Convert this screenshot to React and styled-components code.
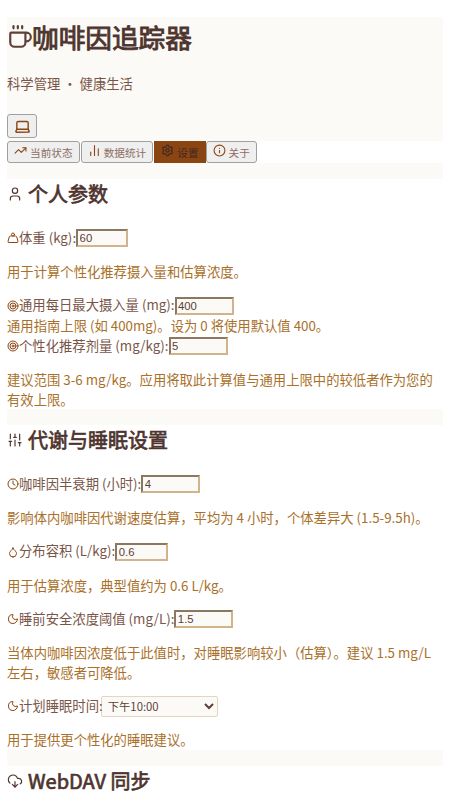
import React from "react";
import styled, { createGlobalStyle } from "styled-components";
import {
  Coffee,
  Laptop,
  TrendingUp,
  BarChart2,
  Settings,
  Info,
  User,
  Weight,
  Target,
  SlidersVertical,
  Clock,
  Droplet,
  Moon,
  CloudDownload,
} from "lucide-react";

const GlobalStyle = createGlobalStyle`
  body {
    margin: 0;
    background: #fff;
    font-family: "Noto Sans CJK SC", sans-serif;
    font-size: 13.33px;
    color: #4e342e;
  }
`;

const Page = styled.div`
  height: 800px;
  overflow: hidden;
  padding: 17px 7px 0;
`;

const Header = styled.header`
  background: #fcfaf6;
  height: 124px;
  overflow: hidden;
`;

const Title = styled.h1`
  display: flex;
  align-items: center;
  margin: 4px 0 0;
  font-size: 26.67px;
  line-height: 32px;
  font-weight: 400;
  -webkit-text-stroke: 0.9px #4e342e;
  color: #4e342e;

  svg {
    margin-right: -1px;
  }
`;

const Subtitle = styled.p`
  margin: 21px 0 0;
  line-height: 19px;
  color: #795548;
`;

const IconButton = styled.button`
  display: block;
  margin-top: 21px;
  width: 30px;
  height: 24px;
  padding: 0;
  font: inherit;
  color: #8b4513;
  background: #efefef;
  border: 1px solid #a0a0a0;
  border-width: 1px 1.5px 1.5px 1px;
  border-radius: 3px;
  line-height: 0;
`;

const Nav = styled.nav`
  display: flex;
  height: 22px;
  background: #fff;
`;

const Tab = styled.button`
  display: flex;
  align-items: center;
  gap: 3px;
  height: 22px;
  margin-right: ${(p) => (p.$tight ? "0" : "1px")};
  padding: 0 6px;
  font: inherit;
  font-size: 10.67px;
  color: ${(p) => (p.$active ? "#3e2723" : "#8d6e63")};
  background: ${(p) => (p.$active ? "#8b4513" : "#efefef")};
  border: 1px solid ${(p) => (p.$active ? "#8b4513" : "#a0a0a0")};
  border-width: 1px 1.5px 1.5px 1px;
  border-radius: ${(p) => (p.$active ? "0" : "3px")};

  svg {
    margin-top: -3px;
    color: ${(p) => (p.$active ? "#3e2723" : "#8b4513")};
  }
`;

const Section = styled.section`
  &::before {
    content: "";
    display: block;
    height: 16px;
    background: #fcfaf6;
  }
`;

const Heading = styled.h2`
  display: flex;
  align-items: center;
  gap: 5px;
  margin: 0;
  padding-bottom: 2px;
  font-size: 20px;
  line-height: 30px;
  font-weight: 400;
  -webkit-text-stroke: 0.7px #4e342e;
  color: #4e342e;

  svg {
    -webkit-text-stroke: 0;
  }
`;

const Field = styled.div`
  display: flex;
  align-items: center;
  margin-top: ${(p) => p.$top ?? 14}px;
  height: 20px;
  color: #795548;
  white-space: nowrap;
`;

const FieldIcon = styled.span`
  display: inline-flex;
  color: #8b4513;
`;

const FieldLabel = styled.span`
  position: relative;
  top: -1px;
`;

const NumberInput = styled.input`
  box-sizing: border-box;
  width: ${(p) => p.$width ?? 59}px;
  height: 18px;
  padding: 1px 1.5px;
  font-family: "Liberation Sans", sans-serif;
  font-size: 11.33px;
  color: #5d4037;
  background: #fcfaf6;
  border: 2px solid #d2b48c;
  border-color: #8a7860 #d2b48c #d2b48c #8a7860;
`;

const TimeSelect = styled.select`
  box-sizing: border-box;
  width: 117px;
  height: 21px;
  margin-left: -2px;
  padding: 0 0 0 2px;
  font-family: "Noto Sans CJK SC", sans-serif;
  font-size: 11.33px;
  color: #5d4037;
  background: #fcfaf6;
  border: 1px solid #e6d5bd;
  border-radius: 2px;
`;

const Hint = styled.p`
  margin: ${(p) => p.$top ?? 14}px 0 0;
  line-height: 19.5px;
  color: #a9702a;
`;

const App = () => {
  return (
    <>
      <GlobalStyle />
      <Page>
        <Header>
          <Title>
            <Coffee size={26} strokeWidth={2} color="#5d4037" />
            咖啡因追踪器
          </Title>
          <Subtitle>科学管理 · 健康生活</Subtitle>
          <IconButton aria-label="theme">
            <Laptop size={17} strokeWidth={2} />
          </IconButton>
        </Header>

        <Nav>
          <Tab>
            <TrendingUp size={13} />
            当前状态
          </Tab>
          <Tab>
            <BarChart2 size={13} />
            数据统计
          </Tab>
          <Tab $active $tight>
            <Settings size={13} />
            设置
          </Tab>
          <Tab>
            <Info size={13} />
            关于
          </Tab>
        </Nav>

        <Section>
          <Heading>
            <User size={16} strokeWidth={1.75} />
            个人参数
          </Heading>
          <Field $top={17}>
            <FieldIcon>
              <Weight size={12} />
            </FieldIcon>
            <FieldLabel>体重 (kg):</FieldLabel>
            <NumberInput defaultValue="60" $width={52} />
          </Field>
          <Hint>用于计算个性化推荐摄入量和估算浓度。</Hint>
          <Field>
            <FieldIcon>
              <Target size={12} />
            </FieldIcon>
            <FieldLabel>通用每日最大摄入量 (mg):</FieldLabel>
            <NumberInput defaultValue="400" />
          </Field>
          <Hint $top={0}>通用指南上限 (如 400mg)。设为 0 将使用默认值 400。</Hint>
          <Field $top={1}>
            <FieldIcon>
              <Target size={12} />
            </FieldIcon>
            <FieldLabel>个性化推荐剂量 (mg/kg):</FieldLabel>
            <NumberInput defaultValue="5" />
          </Field>
          <Hint>
            建议范围 3-6 mg/kg。应用将取此计算值与通用上限中的较低者作为您的有效上限。
          </Hint>
        </Section>

        <Section>
          <Heading>
            <SlidersVertical size={16} strokeWidth={1.75} />
            代谢与睡眠设置
          </Heading>
          <Field $top={17}>
            <FieldIcon>
              <Clock size={12} />
            </FieldIcon>
            <FieldLabel>咖啡因半衰期 (小时):</FieldLabel>
            <NumberInput defaultValue="4" />
          </Field>
          <Hint>影响体内咖啡因代谢速度估算，平均为 4 小时，个体差异大 (1.5-9.5h)。</Hint>
          <Field>
            <FieldIcon>
              <Droplet size={12} />
            </FieldIcon>
            <FieldLabel>分布容积 (L/kg):</FieldLabel>
            <NumberInput defaultValue="0.6" $width={53} />
          </Field>
          <Hint>用于估算浓度，典型值约为 0.6 L/kg。</Hint>
          <Field>
            <FieldIcon>
              <Moon size={12} />
            </FieldIcon>
            <FieldLabel>睡前安全浓度阈值 (mg/L):</FieldLabel>
            <NumberInput defaultValue="1.5" />
          </Field>
          <Hint>当体内咖啡因浓度低于此值时，对睡眠影响较小（估算）。建议 1.5 mg/L 左右，敏感者可降低。</Hint>
          <Field>
            <FieldIcon>
              <Moon size={12} />
            </FieldIcon>
            <FieldLabel>计划睡眠时间:</FieldLabel>
            <TimeSelect defaultValue="22:00">
              <option value="22:00">下午10:00</option>
            </TimeSelect>
          </Field>
          <Hint>用于提供更个性化的睡眠建议。</Hint>
        </Section>

        <Section>
          <Heading>
            <CloudDownload size={16} strokeWidth={1.75} />
            WebDAV 同步
          </Heading>
        </Section>
      </Page>
    </>
  );
};

export default App;
